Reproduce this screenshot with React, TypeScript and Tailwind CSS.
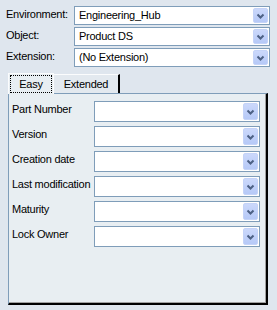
import React from "react"

const Arrow = () => (
  <svg width="9" height="6" viewBox="0 0 9 6">
    <polyline points="1.5,1.5 4.5,4.5 7.5,1.5" fill="none" stroke="#4d6185" strokeWidth="2" />
  </svg>
)

function Combo({ value, h = 19 }: { value?: string; h?: number }) {
  return (
    <div
      className={`flex items-stretch bg-white border border-[#7f9db9] ${h === 19 ? "h-[19px]" : "h-[21px]"}`}
    >
      <div className="flex-1 pl-[4px] flex items-center text-[11px] text-black leading-none truncate">
        {value}
      </div>
      <div className="m-[1px] w-[15px] rounded-[2px] bg-gradient-to-b from-[#cbd8fb] to-[#b6c9f7] border border-[#c4d3f8] flex items-center justify-center">
        <Arrow />
      </div>
    </div>
  )
}

const topRows = [
  { label: "Environment:", value: "Engineering_Hub" },
  { label: "Object:", value: "Product DS" },
  { label: "Extension:", value: "(No Extension)" },
]

const fields = ["Part Number", "Version", "Creation date", "Last modification", "Maturity", "Lock Owner"]

export default function App() {
  return (
    <div className="w-[277px] h-[310px] bg-[#dfe6ee] font-['Liberation_Sans',sans-serif] text-[11px] tracking-[-0.25px] text-black overflow-hidden">
      {/* header selectors */}
      <div className="grid grid-cols-[68px_196px] gap-y-[2px] pl-[6px] pt-[6px]">
        {topRows.map((r) => (
          <React.Fragment key={r.label}>
            <div className="pt-[2px] leading-[13px]">{r.label}</div>
            <Combo value={r.value} />
          </React.Fragment>
        ))}
      </div>

      {/* tabs */}
      <div className="flex items-end ml-[8px] mt-[5px] h-[21px]">
        <div className="h-[21px] w-[46px] border-t border-l border-r border-[#fbfcfd] bg-[#e8eef2] p-[1px] relative z-10 -mb-[1px]">
          <div className="h-full border border-dotted border-black flex items-center justify-center">Easy</div>
        </div>
        <div className="h-[19px] w-[66px] border-t border-[#fbfcfd] border-r-2 border-r-black bg-[#e3e9ef] flex items-center justify-center">
          Extended
        </div>
      </div>

      {/* panel */}
      <div className="ml-[8px] w-[260px] h-[212px] border-t border-l border-[#7f9db9] border-r-2 border-b-2 border-r-black border-b-black bg-[#e8eef2] shadow-[inset_-1px_-1px_0_#a0a0a0]">
        <div className="flex flex-col gap-[4px] pl-[3px] pt-[7px]">
          {fields.map((f) => (
            <div key={f} className="flex items-start">
              <div className="w-[82px] pt-[2px] leading-[13px] whitespace-nowrap">{f}</div>
              <div className="w-[166px]">
                <Combo h={21} />
              </div>
            </div>
          ))}
        </div>
      </div>
    </div>
  )
}
